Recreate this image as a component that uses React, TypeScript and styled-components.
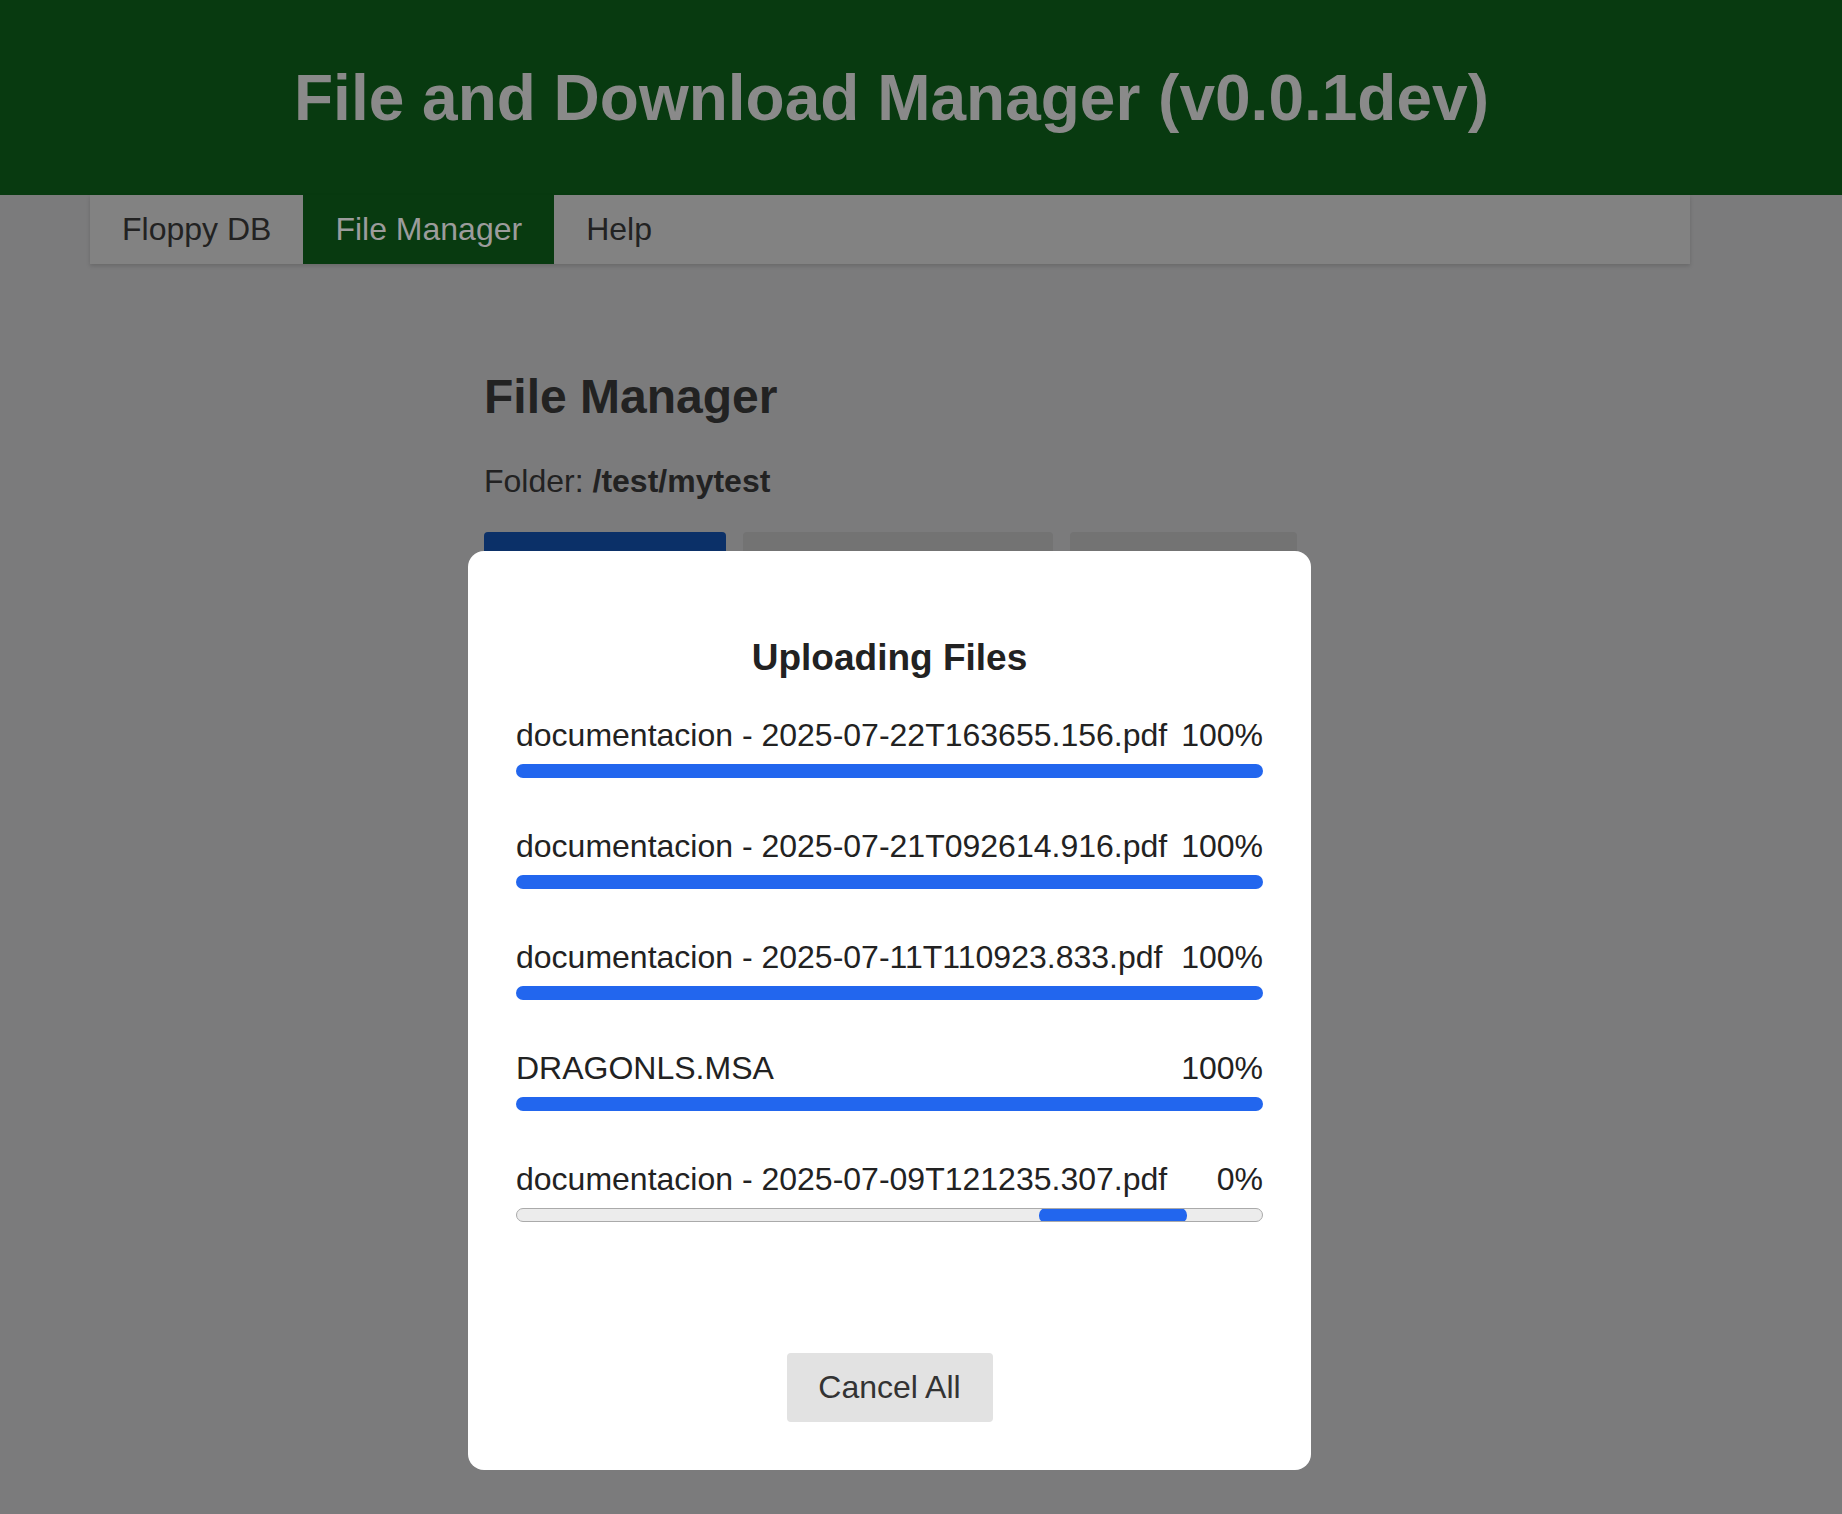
import styled, { createGlobalStyle } from 'styled-components';

const Global = createGlobalStyle`
  html, body { margin: 0; padding: 0; background: #7b7b7c; }
  body { font-family: "Liberation Sans", Arial, sans-serif; color: #222; min-height: 1514px; }
`;

const Header = styled.header`
  height: 195px;
  background: #083a10;
  display: flex;
  align-items: center;
  padding-left: 294px;
  box-sizing: border-box;
`;

const Title = styled.h1`
  margin: 0;
  font-size: 64px;
  font-weight: bold;
  color: #8a8a8a;
`;

const Nav = styled.nav`
  margin: 0 90px;
  width: 1600px;
  height: 69px;
  background: #828282;
  display: flex;
  box-shadow: 0 2px 4px rgba(0, 0, 0, 0.15);
`;

const Tab = styled.div<{ $active?: boolean }>`
  display: flex;
  align-items: center;
  padding: 0 32px;
  font-size: 32px;
  background: ${({ $active }) => ($active ? '#083a10' : 'transparent')};
  color: ${({ $active }) => ($active ? '#9c9c9c' : '#222')};
`;

const Main = styled.main`
  padding-left: 484px;
`;

const PageTitle = styled.h2`
  margin: 105px 0 0;
  font-size: 48px;
  line-height: 55px;
`;

const Folder = styled.p`
  margin: 39px 0 0;
  font-size: 32px;
  line-height: 37px;
`;

const Actions = styled.div`
  display: flex;
  gap: 17px;
  margin-top: 32px;
`;

const ActionButton = styled.div<{ $w: number; $primary?: boolean }>`
  width: ${({ $w }) => $w}px;
  height: 60px;
  border-radius: 4px;
  background: ${({ $primary }) => ($primary ? '#0b3068' : '#737373')};
`;

const Overlay = styled.div`
  position: fixed;
  inset: 0;
`;

const Modal = styled.div`
  position: absolute;
  left: 468px;
  top: 551px;
  width: 843px;
  box-sizing: border-box;
  background: #fff;
  border-radius: 16px;
  padding: 85px 48px 48px;
  display: flex;
  flex-direction: column;
`;

const ModalTitle = styled.h3`
  margin: 0 0 38px;
  text-align: center;
  font-size: 37px;
  line-height: 43px;
  color: #222;
`;

const Row = styled.div`
  display: flex;
  flex-direction: column;
  gap: 10px;
  margin-bottom: 50px;
  &:last-of-type { margin-bottom: 0; }
`;

const RowText = styled.div`
  display: flex;
  justify-content: space-between;
  font-size: 32px;
  line-height: 37px;
  color: #222;
`;

const Track = styled.div<{ $idle?: boolean }>`
  position: relative;
  height: 14px;
  box-sizing: border-box;
  border-radius: 7px;
  background: ${({ $idle }) => ($idle ? '#ececec' : '#2266ee')};
  border: ${({ $idle }) => ($idle ? '1.5px solid #aaa' : 'none')};
  overflow: hidden;
`;

const Chunk = styled.div`
  position: absolute;
  top: -1.5px;
  bottom: -1.5px;
  left: 70%;
  width: 148px;
  border-radius: 7px;
  background: #2266ee;
`;

const Footer = styled.div`
  display: flex;
  justify-content: center;
  margin-top: 81px;
`;

const CancelButton = styled.button`
  width: 206px;
  height: 69px;
  border: none;
  border-radius: 4px;
  background: #e2e2e2;
  color: #333;
  font-family: "Liberation Sans", Arial, sans-serif;
  font-size: 32px;
`;

const uploads = [
  { name: 'documentacion - 2025-07-22T163655.156.pdf', pct: 100 },
  { name: 'documentacion - 2025-07-21T092614.916.pdf', pct: 100 },
  { name: 'documentacion - 2025-07-11T110923.833.pdf', pct: 100 },
  { name: 'DRAGONLS.MSA', pct: 100 },
  { name: 'documentacion - 2025-07-09T121235.307.pdf', pct: 0 },
];

export default function App() {
  return (
    <>
      <Global />
      <Header>
        <Title>File and Download Manager (v0.0.1dev)</Title>
      </Header>
      <Nav>
        <Tab>Floppy DB</Tab>
        <Tab $active>File Manager</Tab>
        <Tab>Help</Tab>
      </Nav>
      <Main>
        <PageTitle>File Manager</PageTitle>
        <Folder>
          Folder: <b>/test/mytest</b>
        </Folder>
        <Actions>
          <ActionButton $w={242} $primary />
          <ActionButton $w={310} />
          <ActionButton $w={227} />
        </Actions>
      </Main>
      <Overlay>
        <Modal>
          <ModalTitle>Uploading Files</ModalTitle>
          {uploads.map((u) => (
            <Row key={u.name}>
              <RowText>
                <span>{u.name}</span>
                <span>{u.pct}%</span>
              </RowText>
              <Track $idle={u.pct === 0}>{u.pct === 0 && <Chunk />}</Track>
            </Row>
          ))}
          <Footer>
            <CancelButton>Cancel All</CancelButton>
          </Footer>
        </Modal>
      </Overlay>
    </>
  );
}
